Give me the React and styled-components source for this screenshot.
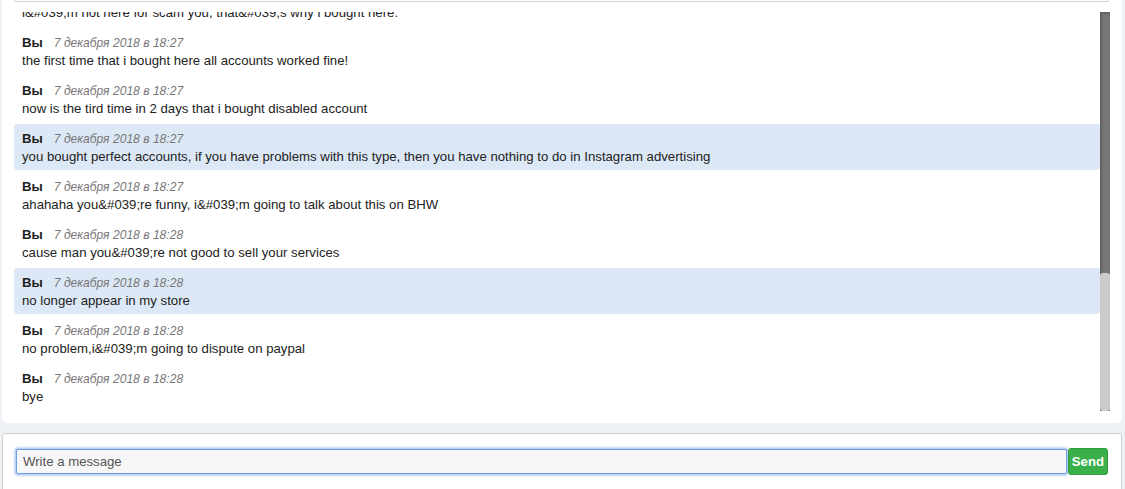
import React, { useEffect, useRef, useState } from 'react';
import styled, { createGlobalStyle } from 'styled-components';

const history = [
    { time: '7 декабря 2018 в 18:18', text: 'hi' },
    { time: '7 декабря 2018 в 18:19', text: 'hello, the accounts from my last order are disabled' },
    { time: '7 декабря 2018 в 18:20', text: 'which order do you mean?' },
    { time: '7 декабря 2018 в 18:20', text: 'the last one, 50 accounts' },
    { time: '7 декабря 2018 в 18:21', text: 'all of them were checked before the sale' },
    { time: '7 декабря 2018 в 18:21', text: 'i logged in and they were asking for a phone number' },
    { time: '7 декабря 2018 в 18:22', text: 'this is normal for new accounts, read the description', mark: true },
    { time: '7 декабря 2018 в 18:22', text: 'i want a refund' },
    { time: '7 декабря 2018 в 18:23', text: 'no refund for verified accounts', mark: true },
    { time: '7 декабря 2018 в 18:23', text: 'this is a scam' },
    { time: '7 декабря 2018 в 18:24', text: 'we have been working for years, nobody calls it a scam' },
    { time: '7 декабря 2018 в 18:24', text: 'i bought from you before' },
    { time: '7 декабря 2018 в 18:25', text: 'then you know the quality' },
    { time: '7 декабря 2018 в 18:25', text: 'this time it is different' },
    { time: '7 декабря 2018 в 18:26', text: 'check your proxy and browser settings' },
    { time: '7 декабря 2018 в 18:26', text: 'i&#039;m not here for scam you, that&#039;s why i bought here.' },
    { time: '7 декабря 2018 в 18:27', text: 'the first time that i bought here all accounts worked fine!' },
    { time: '7 декабря 2018 в 18:27', text: 'now is the tird time in 2 days that i bought disabled account' },
    { time: '7 декабря 2018 в 18:27', text: 'you bought perfect accounts, if you have problems with this type, then you have nothing to do in Instagram advertising', mark: true },
    { time: '7 декабря 2018 в 18:27', text: 'ahahaha you&#039;re funny, i&#039;m going to talk about this on BHW' },
    { time: '7 декабря 2018 в 18:28', text: 'cause man you&#039;re not good to sell your services' },
    { time: '7 декабря 2018 в 18:28', text: 'no longer appear in my store', mark: true },
    { time: '7 декабря 2018 в 18:28', text: 'no problem,i&#039;m going to dispute on paypal' },
    { time: '7 декабря 2018 в 18:28', text: 'bye' },
];

const Global = createGlobalStyle`
    html, body {
        margin: 0;
        padding: 0;
        background: #eef1f5;
        font-family: "Liberation Sans", Arial, sans-serif;
        font-size: 13.2px;
        color: #222;
    }
`;

const Page = styled.div`
    display: flex;
    flex-direction: column;
    gap: 10px;
    padding: 0 3px 0 2px;
    height: 489px;
    overflow: hidden;
`;

const ChatCard = styled.div`
    background: #fff;
    border-radius: 0 0 5px 5px;
    padding: 0 12px 12px 12px;
`;

const TopEdge = styled.div`
    height: 1px;
    margin-right: 1px;
    border: 1px solid #cfcfcf;
    border-top: none;
    border-radius: 0 0 3px 3px;
    margin-bottom: 10px;
`;

const ListRow = styled.div`
    display: flex;
    height: 399px;
`;

const Messages = styled.div`
    flex: 1;
    overflow: hidden;
    display: flex;
    flex-direction: column;
    gap: 2px;
    padding-bottom: 1px;
`;

// scrollbar drawn by hand: dark track, light thumb sized to the visible part
const ScrollTrack = styled.div`
    width: 10px;
    display: flex;
    flex-direction: column;
    justify-content: flex-end;
    background: #767676;
    box-shadow: inset 2px 2px 2px rgba(0, 0, 0, 0.18);
`;

const ScrollThumb = styled.div`
    background: #cbcbcb;
    border-radius: 3px;
`;

const Message = styled.div`
    flex-shrink: 0;
    padding: 6px 8px 4px;
    line-height: 18px;
    border-radius: 3px;
    background: ${p => (p.$mark ? '#dce8f5' : 'transparent')};
`;

const Head = styled.div`
    display: flex;
    gap: 11px;
    align-items: baseline;
`;

const Author = styled.b`
    font-weight: bold;
    color: #222;
`;

const Time = styled.i`
    color: #777;
    font-size: 12.1px;
`;

const Text = styled.div`
    white-space: nowrap;
`;

const Composer = styled.form`
    display: flex;
    align-items: center;
    gap: 1px;
    background: #fff;
    border: 1px solid #d2d2d2;
    border-radius: 3px 3px 0 0;
    padding: 14px 13px 20px 13px;
`;

const Input = styled.input`
    flex: 1;
    height: 25px;
    box-sizing: border-box;
    border: 1px solid #6e9de6;
    border-radius: 2px;
    box-shadow: 0 0 0 1px #b8d0f5, 0 0 3px 1px #8fb6ee;
    background: #f7f7f7;
    padding: 0 6px;
    font-family: "Liberation Sans", Arial, sans-serif;
    font-size: 13.2px;
    outline: none;

    &::placeholder {
        color: #555;
    }
`;

const SendButton = styled.button`
    height: 27px;
    padding: 0 3px;
    border: 1px solid #2f9b3e;
    border-radius: 3px;
    background: #39b04a;
    color: #fff;
    font-family: "Liberation Sans", Arial, sans-serif;
    font-weight: bold;
    font-size: 13.2px;
    cursor: pointer;
`;

export default function App() {
    const listRef = useRef(null);
    const [thumb, setThumb] = useState(0);

    useEffect(() => {
        const el = listRef.current;
        if (!el) return;
        el.scrollTop = el.scrollHeight;
        setThumb(Math.round((el.clientHeight * el.clientHeight) / el.scrollHeight));
    }, []);

    return (
        <>
            <Global />
            <Page>
                <ChatCard>
                    <TopEdge />
                    <ListRow>
                        <Messages ref={listRef}>
                            {history.map((m, i) => (
                                <Message key={i} $mark={m.mark}>
                                    <Head>
                                        <Author>Вы</Author>
                                        <Time>{m.time}</Time>
                                    </Head>
                                    <Text>{m.text}</Text>
                                </Message>
                            ))}
                        </Messages>
                        <ScrollTrack>
                            <ScrollThumb style={{ height: thumb }} />
                        </ScrollTrack>
                    </ListRow>
                </ChatCard>
                <Composer onSubmit={e => e.preventDefault()}>
                    <Input placeholder="Write a message" />
                    <SendButton type="submit">Send</SendButton>
                </Composer>
            </Page>
        </>
    );
}
